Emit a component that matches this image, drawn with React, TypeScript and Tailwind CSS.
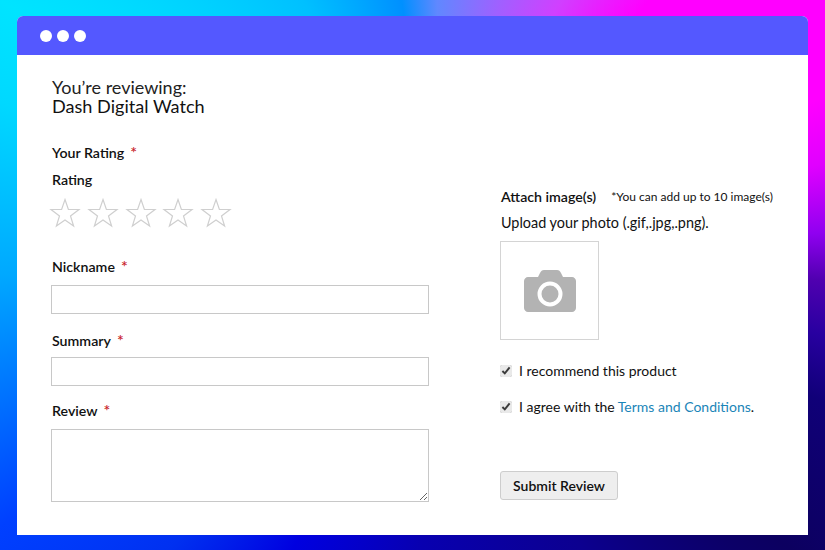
const font = "font-['Lato','Noto_Sans',sans-serif]"

function Label({ text }: { text: string }) {
  return (
    <div className="text-[14.2px] leading-[18px] font-semibold text-[#111]">
      {text}
      <span className="ml-[6px] text-[16px] leading-none text-[#c8232c]">*</span>
    </div>
  )
}

function Star() {
  return (
    <svg width="32" height="32" viewBox="0 0 32 32" fill="none" stroke="#cfcfcf" strokeWidth="1.2">
      <path d="M16 2.5 19.4 12.4 30 12.5 21.5 18.9 24.6 29 16 23 7.4 29 10.5 18.9 2 12.5 12.6 12.4Z" />
    </svg>
  )
}

function Camera() {
  return (
    <svg width="52" height="42" viewBox="0 0 52 42">
      <path
        fill="#b3b3b3"
        d="M4 7h10l2-4c1-2 2-3 4-3h13c2 0 3 1 4 3l2 4h9c2 0 4 2 4 4v27c0 2-2 4-4 4H4c-2 0-4-2-4-4V11c0-2 2-4 4-4Z"
      />
      <circle cx="26" cy="24" r="10.5" fill="#b3b3b3" stroke="#fff" strokeWidth="4" />
    </svg>
  )
}

function Check({ children }: { children: React.ReactNode }) {
  return (
    <label className="flex items-center gap-[6px] text-[14px] leading-[18px] text-[#111]">
      <input type="checkbox" defaultChecked className="m-0 h-[12px] w-[12px] accent-[#e9e9e9]" />
      <span>{children}</span>
    </label>
  )
}

export default function App() {
  return (
    <div
      className={`${font} h-[550px] w-[825px] overflow-hidden px-[17px] pt-[16px] pb-[15px] bg-[conic-gradient(at_53%_46%,#6088ff_0deg,#a060ff_14deg,#d040ff_26deg,#ff00ff_40deg,#ff00ff_68deg,#e000ff_77deg,#9000f0_87deg,#5000b0_94deg,#2800a0_102deg,#100078_111deg,#0c0060_130deg,#0c0068_135deg,#0c0090_154deg,#0800b0_183deg,#0000e0_206deg,#0030f0_222deg,#0040ff_238deg,#0070ff_251deg,#00a8ff_267deg,#00d8ff_289deg,#00e4ff_300deg,#00c0ff_332deg,#0090ff_352deg,#6088ff_360deg)]`}
    >
      <div className="flex h-full w-full flex-col overflow-hidden rounded-t-[6px] bg-white">
        <div className="flex h-[39px] shrink-0 items-center gap-[5px] bg-[#5458ff] pl-[23px]">
          <span className="h-3 w-3 rounded-full bg-white" />
          <span className="h-3 w-3 rounded-full bg-white" />
          <span className="h-3 w-3 rounded-full bg-white" />
        </div>
        <div className="flex flex-1 pl-[35px]">
          <div className="w-[378px] pt-[23px]">
            <div className="text-[18px] leading-[19px] text-[#222]">You’re reviewing:</div>
            <div className="text-[18.1px] leading-[19px] text-[#111]">Dash Digital Watch</div>
            <div className="mt-[28px]">
              <Label text="Your Rating" />
            </div>
            <div className="mt-[9px] text-[14.2px] leading-[18px] font-semibold text-[#111]">Rating</div>
            <div className="mt-[8px] -ml-[3px] flex gap-[5.75px]">
              <Star />
              <Star />
              <Star />
              <Star />
              <Star />
            </div>
            <div className="mt-[29px]">
              <Label text="Nickname" />
            </div>
            <input className="mt-[9px] -ml-px block h-[29px] w-[378px] border border-[#c8c8c8]" />
            <div className="mt-[18px]">
              <Label text="Summary" />
            </div>
            <input className="mt-[7px] -ml-px block h-[29px] w-[378px] border border-[#c8c8c8]" />
            <div className="mt-[16px]">
              <Label text="Review" />
            </div>
            <textarea className="mt-[9px] -ml-px block h-[73px] w-[378px] border border-[#c8c8c8]" />
          </div>
          <div className="ml-[71px] pt-[133px]">
            <div className="flex items-center gap-[15px] leading-[18px] text-[#111]">
              <span className="text-[14.2px] font-semibold">Attach image(s)</span>
              <span className="text-[12px]">*You can add up to 10 image(s)</span>
            </div>
            <div className="mt-[8px] text-[14.4px] leading-[18px] text-[#111]">Upload your photo (.gif,.jpg,.png).</div>
            <div className="mt-[9px] -ml-px flex h-[99px] w-[99px] items-center justify-center border border-[#d4d4d4]">
              <Camera />
            </div>
            <div className="mt-[22px] -ml-px">
              <Check>
                <span className="ml-px">I recommend this product</span>
              </Check>
            </div>
            <div className="mt-[18px] -ml-px">
              <Check>
                <span className="ml-px">
                  I agree with the <span className="text-[#1a85b8]">Terms and Conditions</span>.
                </span>
              </Check>
            </div>
            <button className="mt-[55px] -ml-px h-[29px] w-[118px] rounded-[3px] border border-[#cdcdcd] bg-[#eeeeee] text-[14px] font-semibold text-[#111]">
              Submit Review
            </button>
          </div>
        </div>
      </div>
    </div>
  )
}
